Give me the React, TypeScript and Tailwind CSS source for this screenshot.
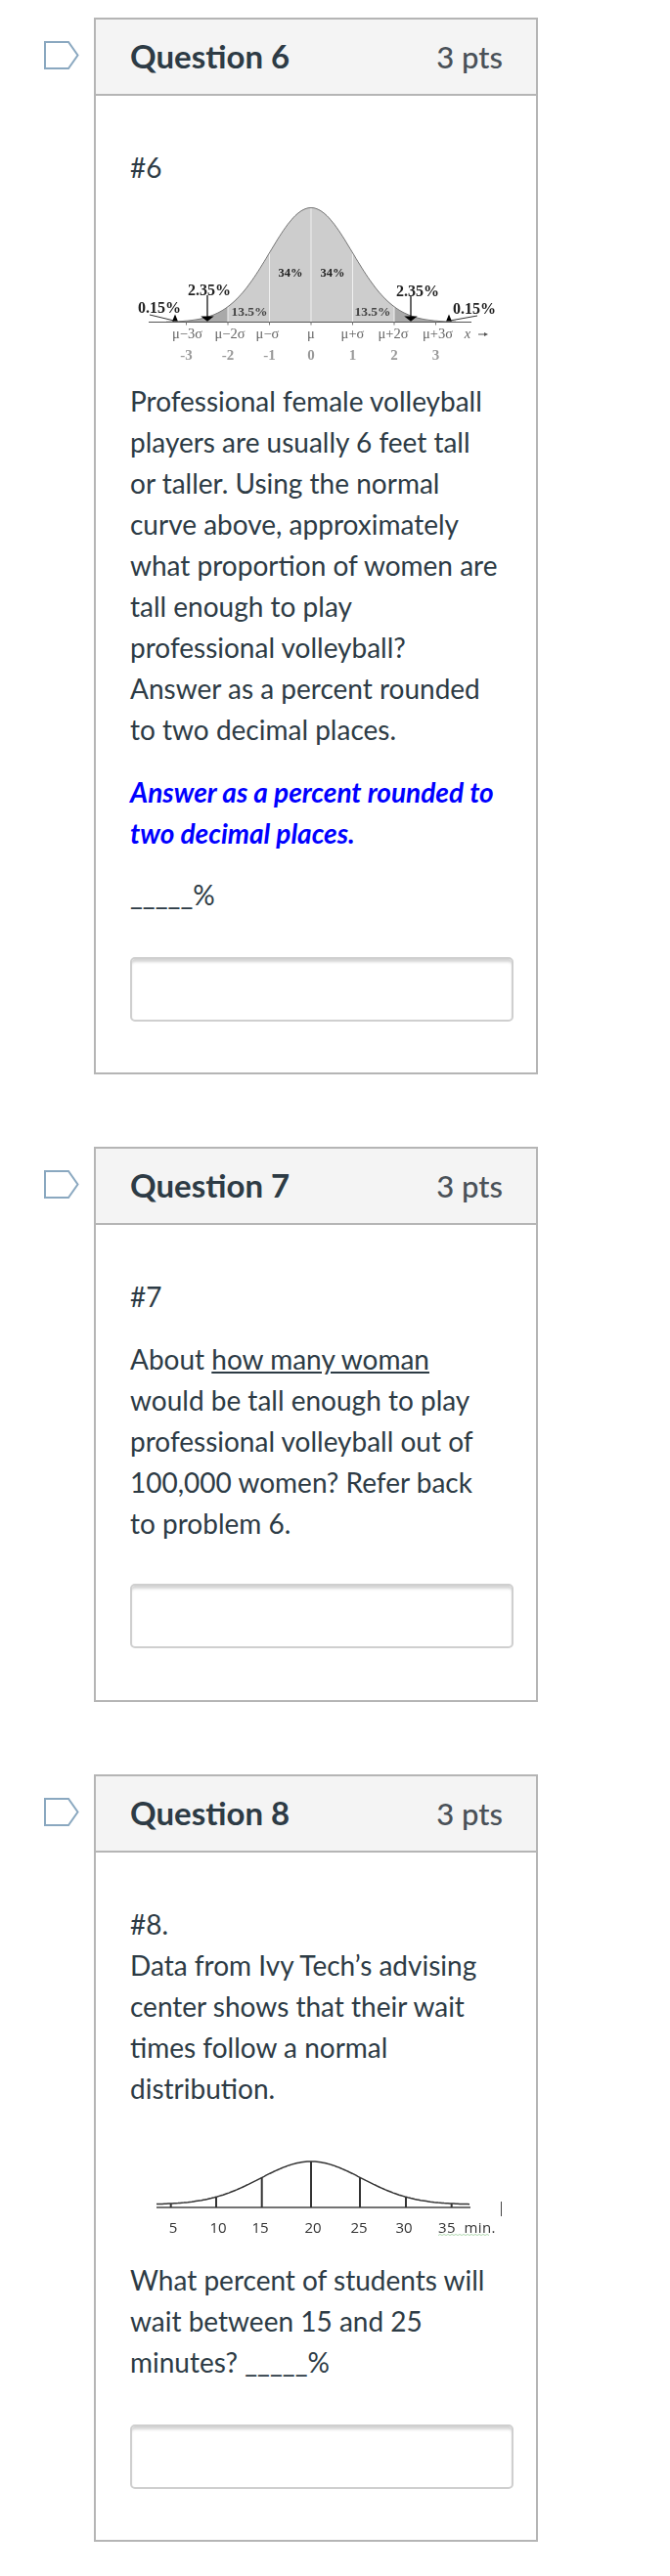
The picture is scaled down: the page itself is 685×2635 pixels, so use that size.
import type { ReactNode } from 'react'

// x position of each sigma step on the first chart
const MU = 198
const SIGMA = 42.5
const BASE = 139.5

function bell(mu: number, sigma: number, peak: number, base: number, from: number, to: number) {
  const pts: string[] = []
  for (let x = from; x <= to; x += 2) {
    const y = base - peak * Math.exp(-((x - mu) ** 2) / (2 * sigma * sigma))
    pts.push(`${x.toFixed(1)},${y.toFixed(1)}`)
  }
  return pts
}

function NormalCurve() {
  const curveY = (x: number) => BASE - 117 * Math.exp(-((x - MU) ** 2) / (2 * SIGMA * SIGMA))
  const area = (a: number, b: number) =>
    `M${a},${BASE} L${bell(MU, SIGMA, 117, BASE, a, b).join(' L')} L${b},${BASE} Z`
  const labels = ['μ−3σ', 'μ−2σ', 'μ−σ', 'μ', 'μ+σ', 'μ+2σ', 'μ+3σ']
  return (
    <svg viewBox="13 2 393 183" width={393} height={183} className="block blur-[0.35px]">
      <path d={area(MU - 3.6 * SIGMA, MU + 3.6 * SIGMA)} fill="#a9a9a9" />
      <path d={area(MU - 2 * SIGMA, MU + 2 * SIGMA)} fill="#cdcdcd" />
      {[-2, -1, 0, 1, 2].map((k) => (
        <line key={k} x1={MU + k * SIGMA} x2={MU + k * SIGMA} y1={BASE} y2={curveY(MU + k * SIGMA)} stroke="#f0f0f0" strokeWidth={1} />
      ))}
      <polyline points={bell(MU, SIGMA, 117, BASE, 50, 346).join(' ')} fill="none" stroke="#777" strokeWidth={1} />
      <line x1={32} x2={362} y1={BASE} y2={BASE} stroke="#555" strokeWidth={1} />
      {[-3, -2, -1, 0, 1, 2, 3].map((k) => (
        <line key={k} x1={MU + k * SIGMA} x2={MU + k * SIGMA} y1={BASE} y2={BASE + 3} stroke="#777" strokeWidth={1} />
      ))}

      <g fontFamily="'Liberation Serif', serif" fontWeight={700} fill="#222">
        <text x={94} y={112} fontSize={16} textAnchor="middle">2.35%</text>
        <text x={43} y={130} fontSize={16} textAnchor="middle">0.15%</text>
        <text x={307} y={113} fontSize={16} textAnchor="middle">2.35%</text>
        <text x={365} y={131} fontSize={16} textAnchor="middle">0.15%</text>
        <text x={177} y={93} fontSize={12.5} textAnchor="middle">34%</text>
        <text x={220} y={93} fontSize={12.5} textAnchor="middle">34%</text>
        <text x={135} y={133} fontSize={13.5} textAnchor="middle" fill="#444">13.5%</text>
        <text x={261} y={133} fontSize={13.5} textAnchor="middle" fill="#444">13.5%</text>
      </g>

      <g stroke="#000" strokeWidth={1.2} fill="#000">
        <line x1={92} x2={92} y1={112} y2={134} />
        <polygon points="87,134 97,134 92,138" />
        <line x1={300} x2={300} y1={113} y2={134} />
        <polygon points="295,134 305,134 300,138" />
        <line x1={33} x2={58} y1={132} y2={138} strokeWidth={0.8} />
        <polygon points="57,138 61,138 59,133" />
        <line x1={368} x2={340} y1={133} y2={138} strokeWidth={0.8} />
        <polygon points="337,138 341,138 339,133" />
      </g>

      <g fontFamily="'Liberation Serif', serif" fontSize={14.5} fill="#666" textAnchor="middle">
        {labels.map((l, i) => (
          <text key={l} x={MU + (i - 3) * SIGMA + (i === 0 ? 1 : i === 1 ? 2 : i === 5 ? -1 : i === 6 ? 2 : 0) - (i === 2 ? 2 : 0)} y={156}>{l}</text>
        ))}
        <text x={358} y={156} fontStyle="italic">x</text>
      </g>
      <line x1={369} x2={376} y1={152} y2={152} stroke="#555" strokeWidth={1} />
      <polygon points="375,150 379,152 375,154" fill="#555" />
      <g fontFamily="'Liberation Serif', serif" fontSize={15} fill="#999" fontWeight={700} textAnchor="middle">
        {[-3, -2, -1, 0, 1, 2, 3].map((k) => (
          <text key={k} x={MU + k * SIGMA} y={178}>{k}</text>
        ))}
      </g>
    </svg>
  )
}

function WaitTimeCurve() {
  const ticks = [54.7, 101, 147.7, 198, 248, 295, 341.7]
  const curve = (x: number) => 85 - 44 * Math.exp(-((x - 198) ** 2) / (2 * 52 * 52))
  const nums: [string, number][] = [['5', 57], ['10', 103], ['15', 146], ['20', 200], ['25', 247], ['30', 293]]
  return (
    <svg viewBox="13 0 393 125" width={393} height={125} className="block blur-[0.3px]">
      <polyline points={bell(198, 52, 44, 85, 40, 360).join(' ')} fill="none" stroke="#333" strokeWidth={1.5} />
      <line x1={40} x2={361} y1={88} y2={88} stroke="#444" strokeWidth={1.4} />
      {ticks.map((x) => (
        <line key={x} x1={x} x2={x} y1={88} y2={curve(x)} stroke="#333" strokeWidth={2} />
      ))}
      <line x1={392.5} x2={392.5} y1={82} y2={97} stroke="#444" strokeWidth={1} />
      <g fontFamily="'Open Sans', sans-serif" fontSize={15} fill="#333" textAnchor="middle">
        {nums.map(([t, x]) => (
          <text key={t} x={x} y={114}>{t}</text>
        ))}
        <text x={328} y={114} textAnchor="start" letterSpacing={0.4} xmlSpace="preserve">35  min.</text>
      </g>
      <path d="M328,116.5 l2,-1 l2,1 l2,-1 l2,1 l2,-1 l2,1 l2,-1 l2,1 l2,-1 l2,1 l2,-1 l2,1 l2,-1 l2,1 l2,-1 l2,1 l2,-1 l2,1 l2,-1 l2,1 l2,-1 l2,1 l2,-1 l2,1 l2,-1 l2,1" fill="none" stroke="#9ccf9c" strokeWidth={0.8} />
    </svg>
  )
}

function AnswerBox() {
  return (
    <div className="h-[66px] w-[392px] rounded-[5px] border-2 border-[#cfcfcf] bg-white shadow-[inset_0_4px_3px_-1px_#d4d4d4]" />
  )
}

function Question({ num, children }: { num: number; children: ReactNode }) {
  return (
    <div className="flex items-start">
      <svg viewBox="0 0 36 29" width={36} height={29} className="mt-6 mr-[15px] shrink-0">
        <path d="M1,1 H25 L34.5,14.5 L25,28 H1 Z" fill="none" stroke="#8aa8c0" strokeWidth={2} />
      </svg>
      <div className="w-[454px] border-2 border-[#b5b5b5]">
        <div className="flex h-[78px] items-center justify-between border-b-2 border-[#b5b5b5] bg-[#f4f4f4] pl-[35px] pr-[34px]">
          <h2 className="text-[33px] font-bold text-[#2d3b45]">Question {num}</h2>
          <span className="mt-px text-[31px] font-medium text-[#4a5158]">3 pts</span>
        </div>
        <div className="pt-[52px] pb-[52px] pl-[35px] text-[28px] leading-[42px] text-[#2d3b45]">
          {children}
        </div>
      </div>
    </div>
  )
}

export default function App() {
  return (
    <div className="flex w-[685px] flex-col gap-[74px] bg-white pt-[18px] pb-[35px] pl-[45px] font-['Lato','Open_Sans',sans-serif]">
      <Question num={6}>
        <p>#6</p>
        <NormalCurve />
        <p className="mt-[14px] w-[378px]">
          Professional female volleyball players are usually 6 feet tall or taller. Using the normal curve above, approximately what proportion of women are tall enough to play professional volleyball? Answer as a percent rounded to two decimal places.
        </p>
        <p className="mt-[22px] w-[392px] font-bold italic text-[#0000ff]">
          Answer as a percent rounded to two decimal places.
        </p>
        <p className="mt-[21px]">_____%</p>
        <div className="mt-[43px]">
          <AnswerBox />
        </div>
      </Question>

      <Question num={7}>
        <p>#7</p>
        <p className="mt-[22px] w-[378px]">
          About <span className="underline">how many woman</span> would be tall enough to play professional volleyball out of 100,000 women? Refer back to problem 6.
        </p>
        <div className="mt-[41px] mb-px">
          <AnswerBox />
        </div>
      </Question>

      <Question num={8}>
        <p>#8.</p>
        <p className="w-[378px]">
          Data from Ivy Tech’s advising center shows that their wait times follow a normal distribution.
        </p>
        <div className="mt-[13px]">
          <WaitTimeCurve />
        </div>
        <p className="mt-[16px] w-[378px]">
          What percent of students will wait between 15 and 25 minutes? _____%
        </p>
        <div className="mt-[43px]">
          <AnswerBox />
        </div>
      </Question>
    </div>
  )
}
